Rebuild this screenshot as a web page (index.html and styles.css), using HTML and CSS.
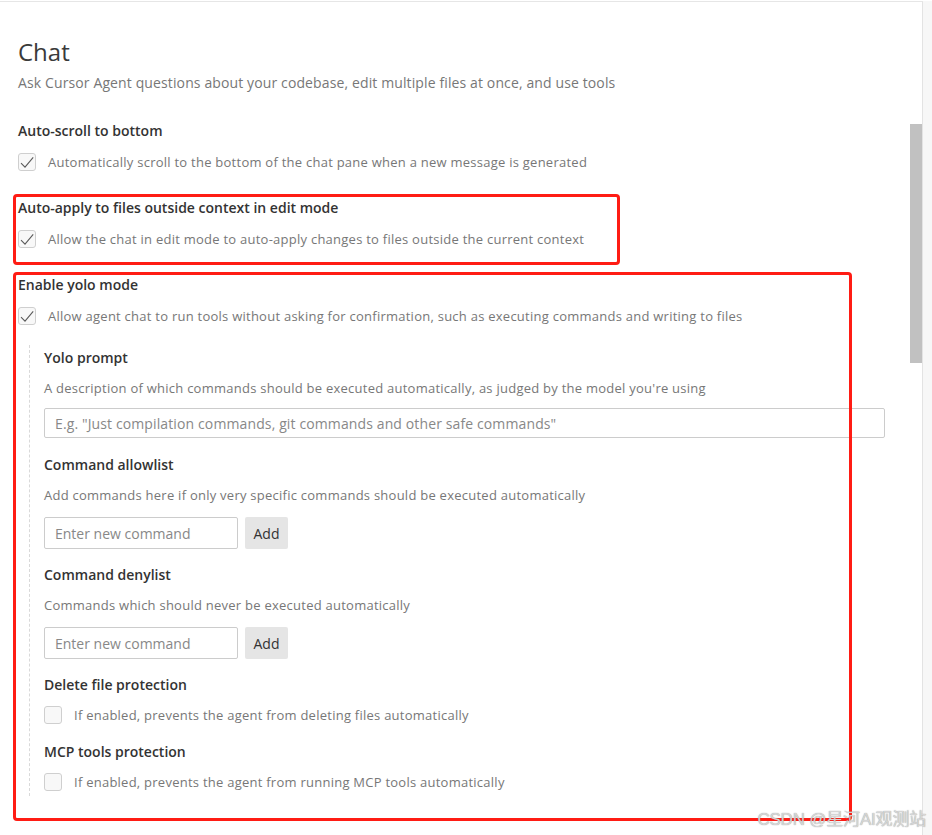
FILE: index.html
```html
<!DOCTYPE html>
<html>
<head>
<meta charset="utf-8">
<link rel="stylesheet" href="styles.css">
</head>
<body>
<div class="window">
  <main class="main">
    <h1 class="title">Chat</h1>
    <p class="subtitle">Ask Cursor Agent questions about your codebase, edit multiple files at once, and use tools</p>

    <section class="setting s-first">
      <h2 class="label">Auto-scroll to bottom</h2>
      <label class="check-row">
        <span class="cb checked"><svg viewBox="0 0 18 18" width="18" height="18"><path d="M3 10.2 L7 14.2 L15.2 4.4" fill="none" stroke="#5a5a5a" stroke-width="1.1"/></svg></span>
        <span class="check-text">Automatically scroll to the bottom of the chat pane when a new message is generated</span>
      </label>
    </section>

    <section class="setting">
      <h2 class="label">Auto-apply to files outside context in edit mode</h2>
      <label class="check-row">
        <span class="cb checked"><svg viewBox="0 0 18 18" width="18" height="18"><path d="M3 10.2 L7 14.2 L15.2 4.4" fill="none" stroke="#5a5a5a" stroke-width="1.1"/></svg></span>
        <span class="check-text">Allow the chat in edit mode to auto-apply changes to files outside the current context</span>
      </label>
    </section>

    <section class="setting">
      <h2 class="label">Enable yolo mode</h2>
      <label class="check-row">
        <span class="cb checked"><svg viewBox="0 0 18 18" width="18" height="18"><path d="M3 10.2 L7 14.2 L15.2 4.4" fill="none" stroke="#5a5a5a" stroke-width="1.1"/></svg></span>
        <span class="check-text">Allow agent chat to run tools without asking for confirmation, such as executing commands and writing to files</span>
      </label>

      <div class="nested">
        <div class="sub">
          <h3 class="label">Yolo prompt</h3>
          <p class="desc">A description of which commands should be executed automatically, as judged by the model you're using</p>
          <input class="text-input wide" type="text" placeholder="E.g. &quot;Just compilation commands, git commands and other safe commands&quot;">
        </div>

        <div class="sub sub-add">
          <h3 class="label">Command allowlist</h3>
          <p class="desc">Add commands here if only very specific commands should be executed automatically</p>
          <div class="add-row">
            <input class="text-input short" type="text" placeholder="Enter new command">
            <button class="add-btn">Add</button>
          </div>
        </div>

        <div class="sub sub-add">
          <h3 class="label">Command denylist</h3>
          <p class="desc">Commands which should never be executed automatically</p>
          <div class="add-row">
            <input class="text-input short" type="text" placeholder="Enter new command">
            <button class="add-btn">Add</button>
          </div>
        </div>

        <div class="sub sub-check">
          <h3 class="label">Delete file protection</h3>
          <label class="check-row">
            <span class="cb"></span>
            <span class="check-text">If enabled, prevents the agent from deleting files automatically</span>
          </label>
        </div>

        <div class="sub sub-check">
          <h3 class="label">MCP tools protection</h3>
          <label class="check-row">
            <span class="cb"></span>
            <span class="check-text">If enabled, prevents the agent from running MCP tools automatically</span>
          </label>
        </div>
      </div>
    </section>

    <div class="scroll-thumb"></div>
    <div class="mark mark-1"></div>
    <div class="mark mark-2"></div>
  </main>
  <aside class="gutter"></aside>
</div>
<div class="watermark">CSDN @星河AI观测站</div>
</body>
</html>
```

FILE: styles.css
```css
* { box-sizing: border-box; }

html, body {
  margin: 0;
  padding: 0;
  background: #ffffff;
}

body {
  font-family: "Open Sans", "Noto Sans", "Noto Sans CJK SC", sans-serif;
  color: #333333;
  width: 932px;
  height: 835px;
  overflow: hidden;
  position: relative;
}

.window {
  display: flex;
  height: 835px;
  padding-top: 1px;
}

.main {
  position: relative;
  flex: 0 0 923px;
  border-top: 1px solid #e6e6e6;
  border-right: 1px solid #e3e3e3;
  padding: 34px 0 0 18px;
}

.gutter {
  flex: 1;
  background: #f7f7f7;
}

.title {
  margin: 0;
  font-size: 24px;
  line-height: 32px;
  font-weight: 400;
  color: #3a3a3a;
}

.subtitle {
  margin: 5px 0 0;
  font-size: 14px;
  line-height: 20px;
  color: #777777;
  letter-spacing: 0.12px;
}

.setting { margin-top: 26px; }
.setting.s-first { margin-top: 28px; }

.label {
  margin: 0;
  font-size: 14px;
  line-height: 20px;
  font-weight: 600;
  color: #333333;
}

.check-row {
  display: flex;
  align-items: center;
  gap: 12px;
  margin-top: 11px;
  height: 20px;
}

.cb {
  flex: 0 0 18px;
  width: 18px;
  height: 18px;
  border: 1px solid #cfcfcf;
  border-radius: 3px;
  background: #f8f8f8;
  display: flex;
  align-items: center;
  justify-content: center;
  overflow: hidden;
}

.cb svg { display: block; flex: 0 0 18px; }

.check-text {
  font-size: 13px;
  line-height: 20px;
  color: #777777;
  white-space: nowrap;
  letter-spacing: 0.25px;
}

.nested {
  margin: 19px 0 0 11px;
  padding: 3px 0 4px 14px;
  border-left: 1px dashed #d9d9d9;
  width: 857px;
}

.sub + .sub { margin-top: 17px; }
.sub-add + .sub { margin-top: 16px; }

.sub-check .check-row { margin-top: 10px; }
.sub-check + .sub-check { margin-top: 17px; }

.desc {
  margin: 10px 0 0;
  font-size: 13px;
  line-height: 20px;
  color: #777777;
  white-space: nowrap;
  letter-spacing: 0.25px;
}

.text-input {
  display: block;
  font-family: inherit;
  font-size: 14px;
  color: #333;
  border: 1px solid #cccccc;
  border-radius: 2px;
  padding: 0 10px;
  background: #fff;
  outline: none;
}

.text-input::placeholder { color: #888888; }

.text-input.wide {
  margin-top: 10px;
  width: 841px;
  height: 30px;
  letter-spacing: 0.12px;
}

.add-row {
  display: flex;
  gap: 7px;
  margin-top: 12px;
}

.text-input.short {
  width: 194px;
  height: 32px;
}

.add-btn {
  width: 43px;
  height: 32px;
  border: none;
  border-radius: 2px;
  background: #e5e5e5;
  font-family: inherit;
  font-size: 14px;
  color: #333333;
  padding: 0;
}

.scroll-thumb {
  position: absolute;
  right: 0;
  top: 122px;
  width: 12px;
  height: 239px;
  background: #c1c1c1;
}

.mark {
  position: absolute;
  border: 3px solid #ff1c14;
  border-radius: 4px;
  pointer-events: none;
}

.mark-1 { left: 13px; top: 192px; width: 607px; height: 71px; }
.mark-2 { left: 13px; top: 270px; width: 839px; height: 549px; }

.watermark {
  position: absolute;
  right: 6px;
  bottom: 5px;
  font-family: "Liberation Sans", "Noto Sans CJK SC", sans-serif;
  font-size: 17px;
  line-height: 20px;
  color: rgba(225, 225, 225, 0.85);
  text-shadow: 0 0 1px rgba(120, 120, 120, 0.9);
  letter-spacing: -0.2px;
}
```
